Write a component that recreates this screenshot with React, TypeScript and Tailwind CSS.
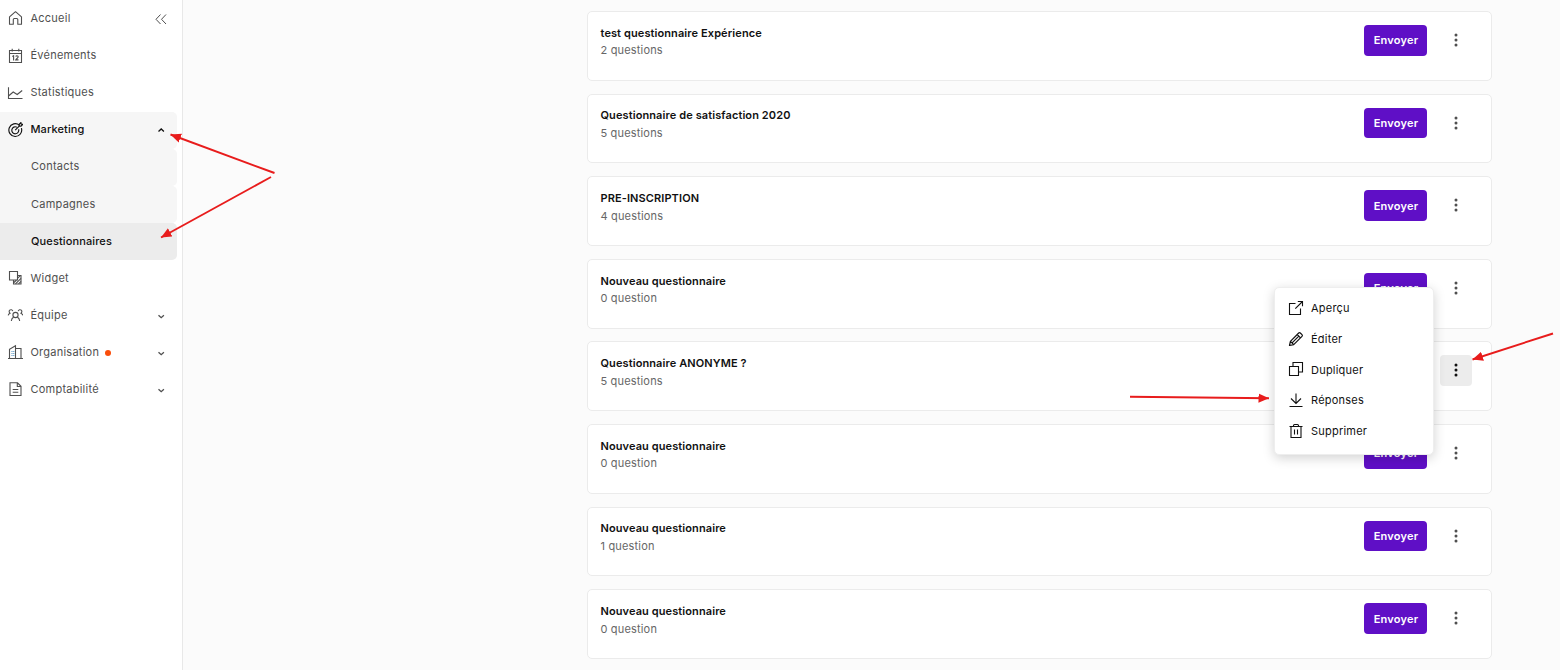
import { useState } from 'react';
import type { ReactNode } from 'react';

interface NavItem {
    label: string;
    icon?: ReactNode;
    chevron?: 'up' | 'down';
    dot?: boolean;
    sub?: boolean;
    className?: string;
}

interface Questionnaire {
    title: string;
    count: string;
}

interface IconProps {
    children: ReactNode;
    width?: number;
}

function Icon({ children, width = 1.1 }: IconProps) {
    return (
        <svg viewBox="0 0 16 16" className="w-4 h-4 shrink-0 mb-px" fill="none" stroke="currentColor" strokeWidth={width}>
            {children}
        </svg>
    );
}

const navItems: NavItem[] = [
    {
        label: 'Accueil',
        icon: <Icon><path d="M2.5 14.2V6.8L8.5 1.7l6 5.1v7.4h-3.7V9.5c0-.6-.4-1-1-1H7.3c-.6 0-1 .4-1 1v4.7z" strokeLinejoin="round" /></Icon>,
    },
    {
        label: 'Événements',
        icon: (
            <Icon>
                <path d="M2.5 2.5h12v12h-12zM2.5 5.5h12M5.2 .8v2.7M11.8 .8v2.7" />
                <path d="M5.3 8.4l1.3-.7v4.8M8.8 8.7c.1-.6.6-.9 1.2-.9.8 0 1.2.4 1.2 1 0 1.2-2 1.9-2.5 3.1h2.8" />
            </Icon>
        ),
    },
    {
        label: 'Statistiques',
        icon: <Icon><path d="M1.5 2.2v11.3h14M1.5 11l4.7-4 4 2.5L15.2 5.5" /></Icon>,
    },
    {
        label: 'Marketing',
        icon: (
            <Icon width={1.15}>
                <g transform="translate(0 -0.5)">
                    <path d="M12.4 3.7a6.4 6.4 0 1 0 2 3" />
                    <path d="M9.9 5.7a3.5 3.5 0 1 0 1.7 2" />
                    <path d="M8.2 8.6l4-4M12.2 4.6V2.8l1.7-1.7.3 1.5 1.5.3-1.7 1.7z" />
                </g>
            </Icon>
        ),
        chevron: 'up',
        className: 'bg-[#f6f6f6] text-[#111111] font-medium tracking-[0.12px]',
    },
    { label: 'Contacts', sub: true, className: 'bg-[#f6f6f6] tracking-[0.25px]' },
    { label: 'Campagnes', sub: true, className: 'bg-[#f6f6f6] tracking-[0.25px]' },
    { label: 'Questionnaires', sub: true, className: 'bg-[#ececec] text-[#111111] font-medium tracking-[0.12px]' },
    {
        label: 'Widget',
        icon: (
            <Icon>
                <path d="M2.5 1.5h8v8.5h-8z" />
                <path d="M10.5 5.5h3.5v8.5H6.5v-4" />
                <path d="M7 12.5l2.5-2.5M8.5 13.9l5.5-5.5M11.5 13.9l2.5-2.5M10.7 8.2l2.6-2.6" />
            </Icon>
        ),
    },
    {
        label: 'Équipe',
        icon: (
            <Icon>
                <circle cx="8.5" cy="8" r="2.6" />
                <path d="M4.3 14c.2-2 1.1-3.3 2.4-4M12.7 14c-.2-2-1.1-3.3-2.4-4" />
                <path d="M1.2 8.4c.2-1.1.8-1.8 1.8-2.2C2 5.2 1.9 3.9 2.7 3.2c1-.9 2.7-.6 3.1 1M15.8 8.4c-.2-1.1-.8-1.8-1.8-2.2 1-1 1.1-2.3.3-3-1-.9-2.7-.6-3.1 1" />
            </Icon>
        ),
        chevron: 'down',
    },
    {
        label: 'Organisation',
        icon: (
            <Icon>
                <path d="M1 14.5h15M2.5 14.5V5.2l6-3.4v12.7M8.5 4.5h5.5v10" />
                <path d="M4.5 7.5h1M6.3 7.5h1M4.5 9.5h1M6.3 9.5h1M4.5 11.5h1M6.3 11.5h1" stroke="#4a8fc0" />
            </Icon>
        ),
        chevron: 'down',
        dot: true,
    },
    {
        label: 'Comptabilité',
        icon: <Icon><path d="M3 1.8h7.5l3.5 3.5v9.2H3zM10.3 1.8v3.7H14M5.7 8.5h5.6M5.7 11.2h5.6" /></Icon>,
        chevron: 'down',
    },
];

const questionnaires: Questionnaire[] = [
    { title: 'test questionnaire Expérience', count: '2 questions' },
    { title: 'Questionnaire de satisfaction 2020', count: '5 questions' },
    { title: 'PRE-INSCRIPTION', count: '4 questions' },
    { title: 'Nouveau questionnaire', count: '0 question' },
    { title: 'Questionnaire ANONYME ?', count: '5 questions' },
    { title: 'Nouveau questionnaire', count: '0 question' },
    { title: 'Nouveau questionnaire', count: '1 question' },
    { title: 'Nouveau questionnaire', count: '0 question' },
];

const menuItems = [
    {
        label: 'Aperçu',
        icon: <Icon><path d="M7.5 3.5h-6v11h11v-6M9.8 1.5h4.7v4.7M14.5 1.5L7.3 8.7" /></Icon>,
    },
    {
        label: 'Éditer',
        icon: <Icon width={1.2}><path d="M1.5 14.5l.9-4.2 8.3-8.3c.5-.5 1.1-.5 1.6 0l1.7 1.7c.5.5.5 1.1 0 1.6l-8.3 8.3zM2.4 10.3l3.3 3.3M9.2 3.5l3.3 3.3M10.8 5.2l-6.7 6.7" strokeLinejoin="round" /></Icon>,
    },
    {
        label: 'Dupliquer',
        icon: <Icon><path d="M1.5 5.5h9v9h-9zM5 5.5v-4h9.5V11h-4" /></Icon>,
    },
    {
        label: 'Réponses',
        icon: <Icon><path d="M8 1.5v10M3 6.5l5 5 5-5M1.5 14.5h13" /></Icon>,
    },
    {
        label: 'Supprimer',
        icon: <Icon><path d="M3 3.5h10v11H3zM1.5 3.5h13M5.5 3.5v-1c0-.6.4-1 1-1h3c.6 0 1 .4 1 1v1M6.5 6.5v5M9.5 6.5v5" /></Icon>,
    },
];

// Annotation arrows, drawn from tail to tip
const arrows = [
    { x1: 274.5, y1: 173, x2: 170.5, y2: 134.5 },
    { x1: 271, y1: 177, x2: 161, y2: 237.5 },
    { x1: 1130, y1: 396.8, x2: 1269, y2: 398.2 },
    { x1: 1553, y1: 333.5, x2: 1472.5, y2: 359.5 },
];

function Chevron({ dir }: { dir: 'up' | 'down' }) {
    return (
        <svg viewBox="0 0 8 8" className="w-2 h-2 ml-auto" fill="none" stroke="currentColor" strokeWidth={1.3}>
            <path d={dir === 'up' ? 'M1.5 5.5L4.2 3l2.7 2.5' : 'M1.5 3.2L4.2 5.7l2.7-2.5'} />
        </svg>
    );
}

function Sidebar() {
    return (
        <aside className="w-[183px] shrink-0 bg-white border-r border-[#e8e8e8] pt-[0.4px] pr-[5px]">
            {navItems.map((item, idx) => (
                <div
                    key={item.label}
                    className={`flex items-center h-[37.1px] pr-3 rounded-r-[5px] ${item.sub ? 'pl-[31px]' : 'pl-[7px] gap-[7.4px]'} ${item.className ?? 'tracking-[0.25px]'}`}
                >
                    {item.icon}
                    <span className="pb-[1.3px]">{item.label}</span>
                    {item.dot && <span className="w-1.5 h-1.5 rounded-full bg-[#fa4d0a] -ml-[1.6px] mt-px" />}
                    {item.chevron && <Chevron dir={item.chevron} />}
                    {idx === 0 && (
                        <svg viewBox="0 0 12 12" className="w-3 h-3 ml-auto -mr-[2px]" fill="none" stroke="currentColor">
                            <path d="M5.5 1.5L1 6.3l4.5 4.7M11 1.5L6.5 6.3l4.5 4.7" />
                        </svg>
                    )}
                </div>
            ))}
        </aside>
    );
}

function ActionMenu() {
    return (
        <div className="absolute right-[38px] -top-[68px] z-10 w-[160px] h-[168px] bg-white rounded-[5px] border border-[#eeeeee] shadow-[0_3px_12px_rgba(0,0,0,0.18)] pt-[4.8px] tracking-[0.22px] text-[#111111]">
            {menuItems.map((item) => (
                <button key={item.label} className="flex items-center w-full h-[30.7px] pl-[13px] gap-[7px]">
                    {item.icon}
                    <span>{item.label}</span>
                </button>
            ))}
        </div>
    );
}

export default function App() {
    const [openMenu, setOpenMenu] = useState<number | null>(4);

    return (
        <div className="relative flex h-[670px] overflow-hidden bg-[#fbfbfb] font-[Inter,sans-serif] text-[11px] text-[#4f4f4f]">
            <Sidebar />

            <main className="flex flex-col gap-[12.8px] w-[905px] ml-[404px] pt-[11.05px]">
                {questionnaires.map((q, idx) => {
                    const isOpen = openMenu === idx;

                    return (
                        <div key={idx} className="flex items-start h-[69.8px] shrink-0 bg-white border border-[#ebebeb] rounded-[5px] pl-[12.5px] pr-[19px] pt-[13px]">
                            <div className="flex-1 -mt-[1.2px]">
                                <h3 className="leading-[18px] font-semibold tracking-[0.1px] text-[#111111]">{q.title}</h3>
                                <p className="pt-[0.6px] leading-[17.6px] tracking-[0.17px] text-[#666666]">{q.count}</p>
                            </div>
                            <button className="w-[63px] h-[30.6px] rounded-[4px] bg-[#5f0fc6] text-white font-semibold tracking-[0.2px] pt-[0.8px] pl-px">
                                Envoyer
                            </button>
                            <div className="relative ml-[13px]">
                                <button
                                    onClick={() => setOpenMenu(isOpen ? null : idx)}
                                    className={`flex items-center justify-center w-8 h-[30.6px] pb-[0.8px] pl-[0.6px] rounded-[4px] ${isOpen ? 'bg-[#ececec] text-[#111111]' : ''}`}
                                >
                                    <svg viewBox="0 0 4 14" className="w-1 h-3.5" fill="currentColor">
                                        <circle cx="2" cy="2" r="1.5" />
                                        <circle cx="2" cy="7" r="1.5" />
                                        <circle cx="2" cy="12" r="1.5" />
                                    </svg>
                                </button>
                                {isOpen && <ActionMenu />}
                            </div>
                        </div>
                    );
                })}
            </main>

            <svg className="absolute inset-0 z-20 w-full h-full pointer-events-none" viewBox="0 0 1560 670">
                <defs>
                    <marker id="head" markerUnits="userSpaceOnUse" markerWidth="11" markerHeight="10" refX="10.5" refY="5" orient="auto">
                        <path d="M0 0.3L10.5 5L0 9.7z" fill="#e81c1c" />
                    </marker>
                </defs>
                {arrows.map((a, i) => (
                    <line key={i} {...a} stroke="#e81c1c" strokeWidth={1.9} markerEnd="url(#head)" />
                ))}
            </svg>
        </div>
    );
}
